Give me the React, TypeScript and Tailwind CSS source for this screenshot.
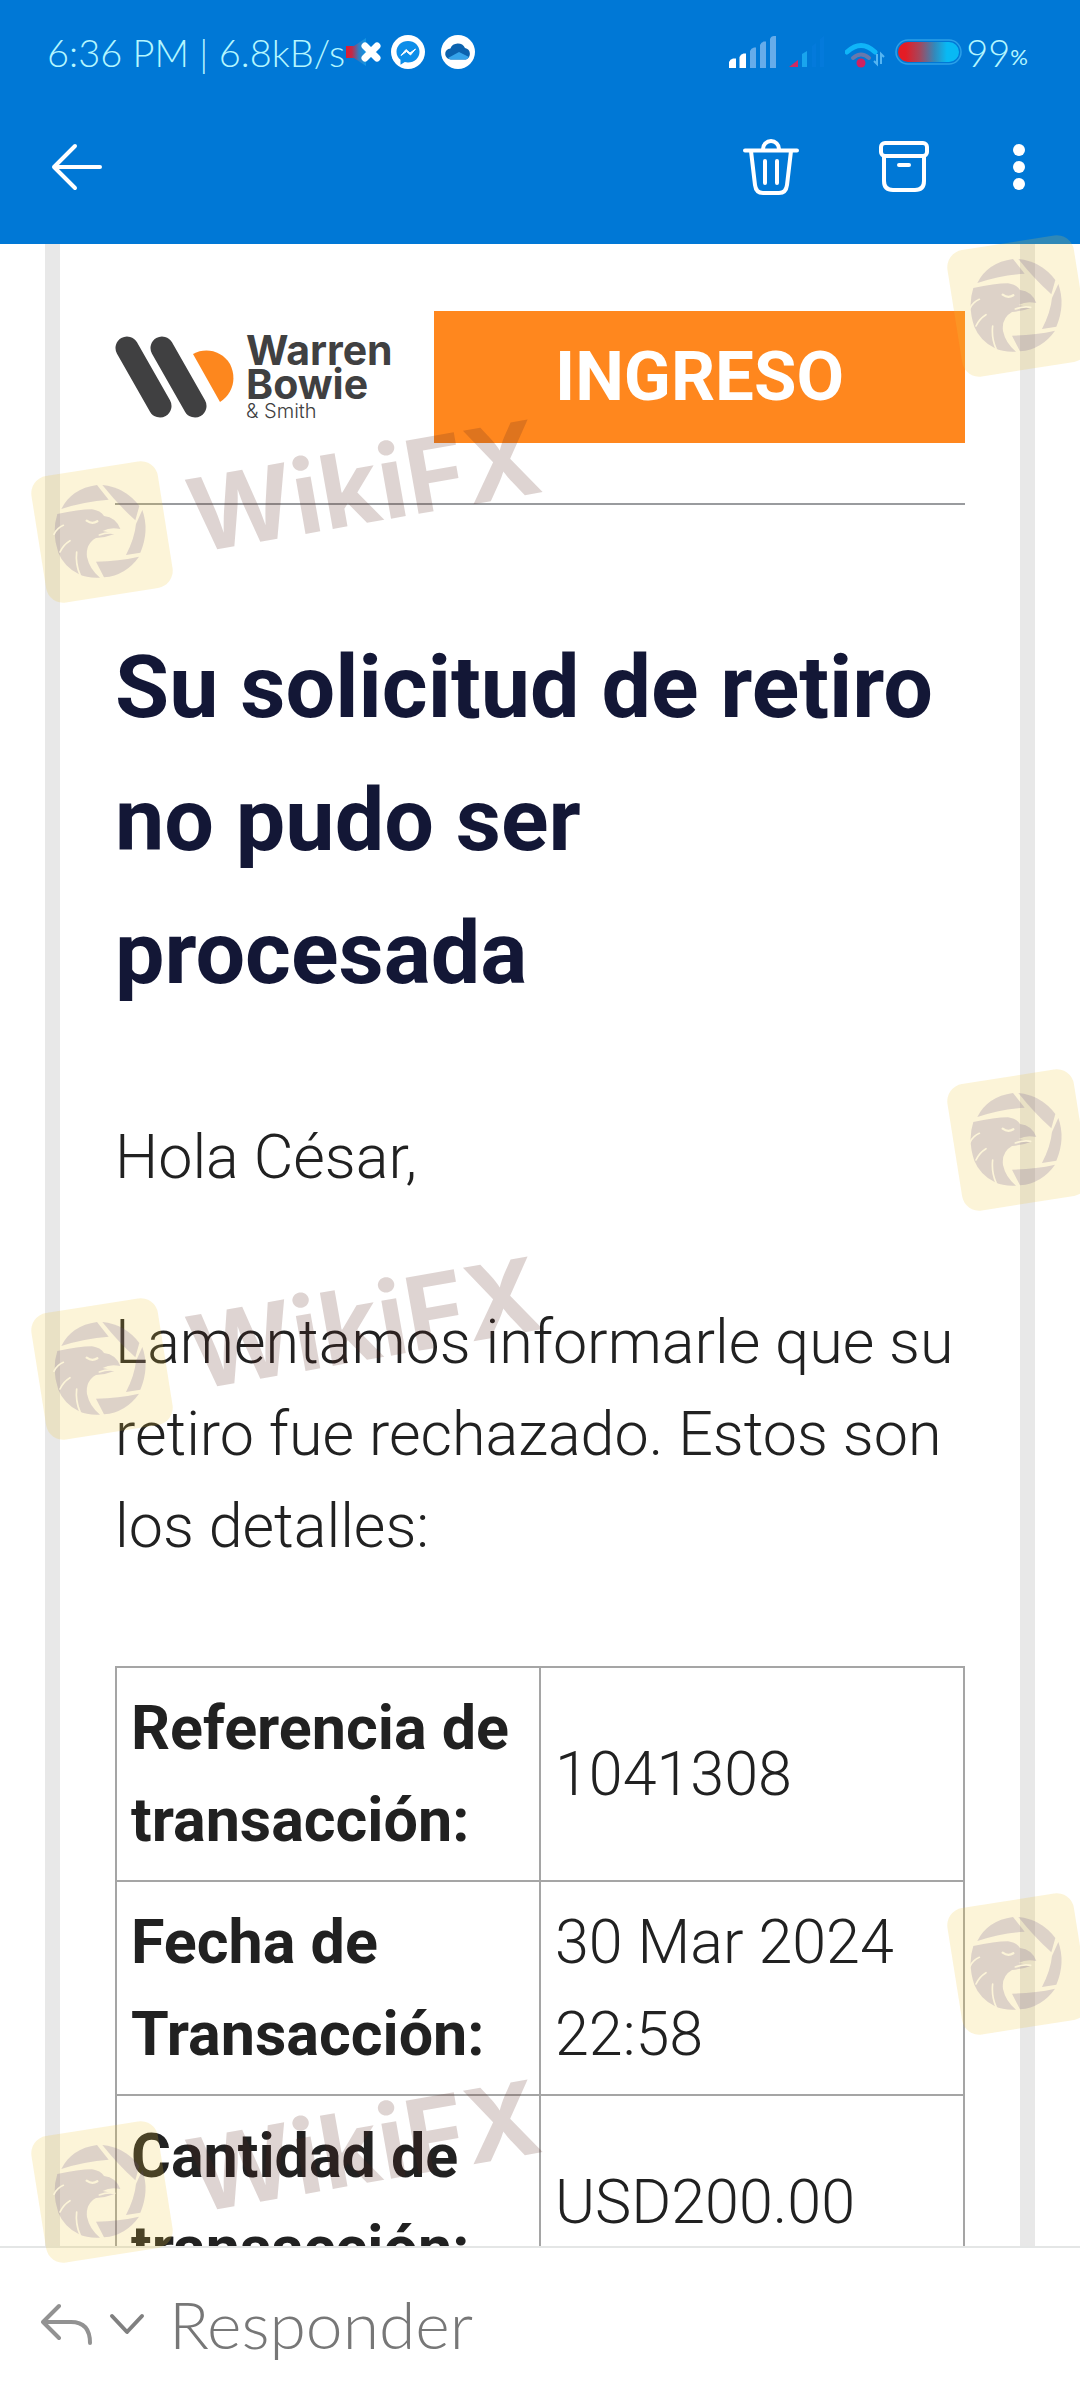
import React from 'react'

const details = [
  { label: 'Referencia de transacción:', value: '1041308' },
  { label: 'Fecha de Transacción:', value: '30 Mar 2024 22:58' },
  { label: 'Cantidad de transacción:', value: 'USD200.00' },
]

const StatusBar = () => {
  return (
    <div className="flex h-[90px] items-center justify-between pt-[14px] pl-[47px] pr-[52px] font-['Lato',sans-serif] font-light text-[#b4f6ff]">
      <div className="flex items-center">
        <span className="text-[38px] leading-[48px] whitespace-nowrap">6:36 PM | 6.8kB/s</span>
        <svg className="mr-2" width="38" height="34" viewBox="0 0 38 34">
          <defs>
            <linearGradient id="mute">
              <stop offset="0" stopColor="#e01b2c" />
              <stop offset="0.3" stopColor="#c22a48" />
              <stop offset="0.65" stopColor="#2f7fc4" />
              <stop offset="1" stopColor="#0f95e6" />
            </linearGradient>
          </defs>
          <path d="M1 11h8l12-8v28l-12-8h-8z" fill="url(#mute)" />
          <path d="M20 11l12 12M32 11l-12 12" stroke="#fff" strokeWidth="7" strokeLinecap="round" />
        </svg>
        <svg width="34" height="34" viewBox="0 0 34 34">
          <circle cx="17" cy="17" r="17" fill="#fff" />
          <path d="M17 6c-6.500 0-11.500 4.600-11.500 10.700 0 3.400 1.500 6 4 8v5l4.300-2.600c1 .2 2 .4 3.200.4 6.500 0 11.500-4.700 11.500-10.800S23.500 6 17 6z" fill="#0d8ee9" />
          <path d="M10 20.500l5-6 4 3.500 5.500-4-5 6-4-3.500z" fill="#fff" stroke="#fff" />
        </svg>
        <svg className="ml-4" width="34" height="34" viewBox="0 0 34 34">
          <circle cx="17" cy="17" r="17" fill="#fff" />
          <path d="M10 24.500a5.500 5.500 0 0 1-.6-11A8 8 0 0 1 24 13a6 6 0 0 1 1 11.500z" fill="#0b62ae" />
          <path d="M7 23l11-6 10 5a5 5 0 0 1-3 2.500H10a5 5 0 0 1-3-1.500z" fill="#36a3ea" />
        </svg>
      </div>
      <div className="flex items-center">
        <svg className="mr-3" width="48" height="32" viewBox="0 0 48 32">
          <path d="M0 26q1-3 4-3.500h3V32H0z" fill="#fff" />
          <path d="M10.500 21q1-3 4-3.500h2.500V32h-6.500z" fill="#fff" />
          <path d="M21 15q1-3 4-3.500h2V32h-6zM31 9q1-3 4-3.500h2V32h-6zM41 3q1-3 4-3h2v32h-6z" fill="#66acea" />
        </svg>
        <svg className="mr-5" width="36" height="32" viewBox="0 0 36 32">
          <path d="M0 31l9-7v7z" fill="#d02a63" />
          <path d="M13 18l5-3v16h-5z" fill="#19a5ee" />
          <path d="M23 10l4-3v24h-4zM31 3l4-3v31h-4z" fill="#047adb" />
        </svg>
        <svg className="mr-2.5" width="40" height="32" viewBox="0 0 40 32">
          <path d="M2 16q14-13 28 0" fill="none" stroke="#0fb5f8" strokeWidth="5" strokeLinecap="round" />
          <path d="M8 22q8-7 16 0" fill="none" stroke="#6878ac" strokeWidth="4" strokeLinecap="round" />
          <circle cx="16" cy="27" r="4.500" fill="#cf2160" />
          <path d="M32 18v10l-3-3M36 28V18l3 3" fill="none" stroke="#55b5f2" strokeWidth="2" />
        </svg>
        <svg className="mr-1" width="67" height="26" viewBox="0 0 67 26">
          <defs>
            <linearGradient id="charge">
              <stop offset="0.12" stopColor="#e41c25" />
              <stop offset="0.35" stopColor="#a8455a" />
              <stop offset="0.6" stopColor="#3389bb" />
              <stop offset="0.8" stopColor="#08b9f4" />
            </linearGradient>
          </defs>
          <rect x="1" y="1" width="65" height="24" rx="12" fill="none" stroke="#2ba0e8" strokeWidth="1.500" />
          <rect x="3" y="3" width="61" height="20" rx="10" fill="url(#charge)" />
        </svg>
        <span className="text-[38px] leading-[48px]">99</span>
        <span className="pt-2.5 text-[22px] leading-[24px] font-normal">%</span>
      </div>
    </div>
  )
}

const Toolbar = () => {
  return (
    <div className="flex h-[154px] items-center justify-between pr-[51px] pl-[51px]">
      <button type="button" aria-label="Atrás">
        <svg width="52" height="48" viewBox="0 0 52 48" fill="none" stroke="#fff" strokeWidth="4" strokeLinecap="round" strokeLinejoin="round">
          <path d="M49 24H3M24 3L3 24l21 21" />
        </svg>
      </button>
      <div className="flex items-center gap-20">
        <button type="button" aria-label="Eliminar">
          <svg width="56" height="58" viewBox="0 0 56 58" fill="none" stroke="#fff" strokeWidth="4" strokeLinecap="round" strokeLinejoin="round">
            <path d="M2 12.500h52M20 11a8 8 0 0 1 16 0M8 13l4 34q1 8 8 8h16q7 0 8-8l4-34M22 23v22M34 23v22" />
          </svg>
        </button>
        <button type="button" aria-label="Archivar">
          <svg width="50" height="52" viewBox="0 0 50 52" fill="none" stroke="#fff" strokeWidth="4" strokeLinecap="round" strokeLinejoin="round">
            <rect x="2" y="2" width="46" height="13" rx="4" />
            <path d="M5 15v25q0 9 9 9h22q9 0 9-9V15M20 24h10" />
          </svg>
        </button>
        <button type="button" aria-label="Más opciones">
          <svg width="20" height="46" viewBox="0 0 20 46" fill="#fff">
            <circle cx="10" cy="6" r="6" />
            <circle cx="10" cy="23" r="6" />
            <circle cx="10" cy="40" r="6" />
          </svg>
        </button>
      </div>
    </div>
  )
}

const CompanyLogo = () => {
  return (
    <div className="flex w-[319px] items-center gap-3 text-[#404041]">
      <svg width="119" height="82" viewBox="0 0 119 82">
        <path d="M12 12l33 58M47 12l33 58" stroke="#404041" strokeWidth="23" strokeLinecap="round" />
        <path d="M78 18c13-7 29-3 37 10 7 14 3 30-10 38z" fill="#fd871e" />
      </svg>
      <div className="font-['Inter',sans-serif]">
        <p className="text-[41px] leading-[34px] font-bold">Warren</p>
        <p className="text-[41px] leading-[34px] font-bold">Bowie</p>
        <p className="text-[20px] leading-[20px]">&amp; Smith</p>
      </div>
    </div>
  )
}

// eagle inside a tilted tile
const EagleTile = () => {
  return (
    <svg width="144" height="150" viewBox="144 75 432 450">
      <rect x="168" y="108" width="384" height="384" rx="52" transform="rotate(-9 360 300)" fill="#f0c83c" fillOpacity="0.2" />
      <g fill="#644a8e" fillOpacity="0.2">
        <path d="M238 231Q268 170 345 159L380 203Q306 208 238 231z" />
        <path d="M361 159Q430 166 472 222L460 265Q408 218 361 159z" />
        <path d="M481 234Q503 296 475 362L432 369Q458 318 462 276z" />
        <path d="M342 389Q410 388 471 374Q432 430 366 436z" />
        <path d="M226 246Q290 232 330 232Q356 236 366 252Q402 256 415 291Q385 284 362 297L400 305Q372 316 342 318Q310 336 315 375Q323 412 354 437Q316 439 290 426Q246 404 229 362Q208 300 226 246z" />
      </g>
      <g fill="none" stroke="#fcf4d8" strokeWidth="5" strokeLinecap="round">
        <path d="M216 307Q225 288 244 280M234 360Q244 338 264 326M294 428Q280 396 284 360M352 309Q376 300 398 304" />
        <path d="M314 266Q330 278 346 268" strokeWidth="7" />
      </g>
    </svg>
  )
}

const WatermarkName = ({ className }: { className: string }) => {
  return (
    <span className={`absolute left-[186px] -rotate-10 font-['Inter',sans-serif] text-[102px] leading-[120px] font-bold text-[#5a281e]/20 ${className}`}>
      WikiFX
    </span>
  )
}

const Watermarks = () => {
  return (
    <div className="pointer-events-none absolute inset-0 overflow-hidden" aria-hidden="true">
      <div className="absolute top-[231px] left-[946px]"><EagleTile /></div>
      <div className="absolute top-[1065px] left-[946px]"><EagleTile /></div>
      <div className="absolute top-[1889px] left-[946px]"><EagleTile /></div>
      <div className="absolute top-[457px] left-[30px]"><EagleTile /></div>
      <div className="absolute top-[1294px] left-[30px]"><EagleTile /></div>
      <div className="absolute top-[2117px] left-[30px]"><EagleTile /></div>
      <WatermarkName className="top-[426px]" />
      <WatermarkName className="top-[1263px]" />
      <WatermarkName className="top-[2086px]" />
    </div>
  )
}

const App = () => {
  return (
    <div className="relative flex h-screen flex-col overflow-hidden bg-white font-['Roboto',sans-serif]">
      <header className="shrink-0 bg-[#0078d6]">
        <StatusBar />
        <Toolbar />
      </header>

      <main className="min-h-0 flex-1 overflow-y-auto [scrollbar-width:none]">
        <div className="mx-[45px] border-x-[15px] border-[#e8e8e8] px-[55px] pt-[67px] text-[61px] leading-[92px] font-light text-[#212121]">
          <div className="flex items-center">
            <CompanyLogo />
            <a href="#ingreso" className="flex h-[132px] flex-1 items-center justify-center bg-[#ff871e] text-[69px] font-bold text-white">
              INGRESO
            </a>
          </div>
          <hr className="mt-[60px] border-t-2 border-[#999b9e]" />

          <h1 className="mt-[115px] text-[88px] leading-[133px] font-bold text-[#131736]">
            Su solicitud de retiro no pudo ser procesada
          </h1>
          <p className="mt-[92px]">Hola César,</p>
          <p className="mt-[93px]">Lamentamos informarle que su retiro fue rechazado. Estos son los detalles:</p>

          <table className="mt-[94px] w-full table-fixed border-collapse text-left">
            <tbody>
              {details.map((item) => (
                <tr key={item.label}>
                  <th scope="row" className="border-2 border-[#a5a5a5] px-[14px] py-[14px] font-bold">{item.label}</th>
                  <td className="border-2 border-[#a5a5a5] px-[14px] py-[14px]">{item.value}</td>
                </tr>
              ))}
            </tbody>
          </table>
        </div>
      </main>

      <footer className="flex h-[154px] shrink-0 items-center border-t-2 border-[#e4e6e6] bg-white px-[41px] text-[#777]">
        <button type="button" aria-label="Opciones de respuesta" className="flex items-center gap-4">
          <svg width="52" height="42" viewBox="0 0 52 42" fill="none" stroke="#929292" strokeWidth="4" strokeLinecap="round" strokeLinejoin="round">
            <path d="M18 3L2 19l16 16M2 19h28q19 0 19 21" />
          </svg>
          <svg width="36" height="22" viewBox="0 0 36 22" fill="none" stroke="#808080" strokeWidth="4" strokeLinecap="round" strokeLinejoin="round">
            <path d="M3 3l15 16L33 3" />
          </svg>
        </button>
        <button type="button" className="ml-6 font-['Lato',sans-serif] text-[66px] leading-[80px] font-light">Responder</button>
      </footer>

      <Watermarks />
    </div>
  )
}

export default App
